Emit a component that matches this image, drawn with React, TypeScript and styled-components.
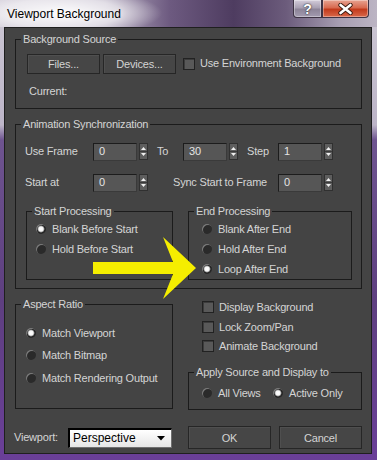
import React from "react"
import styled, { createGlobalStyle } from "styled-components"

const GlobalStyle = createGlobalStyle`
  body {
    margin: 0;
    background: #5a3a7a;
  }
  * {
    box-sizing: border-box;
  }
`

const SpinArrowsIcon = () => (
  <svg width="7" height="15" viewBox="0 0 7 15">
    <polygon points="1,6 3.5,3 6,6" fill="#f0f0f0" />
    <line x1="0" y1="7.5" x2="7" y2="7.5" stroke="#3a3a3a" strokeWidth="1" />
    <polygon points="1,9 3.5,12 6,9" fill="#f0f0f0" />
  </svg>
)

const Spinner: React.FC<{ value: string }> = ({ value }) => (
  <SpinWrap>
    <Field>{value}</Field>
    <SpinArrows>
      <SpinArrowsIcon />
    </SpinArrows>
  </SpinWrap>
)

const RadioItem: React.FC<{ label: string; on?: boolean; w?: number; h?: number }> = ({ label, on, w, h }) => (
  <OptionRow $w={w} $h={h}>
    <Radio $on={on} />
    <span>{label}</span>
  </OptionRow>
)

const CheckItem: React.FC<{ label: string }> = ({ label }) => (
  <CheckRow>
    <Checkbox />
    <span>{label}</span>
  </CheckRow>
)

export default function App() {
  return (
    <>
      <GlobalStyle />
      <Window>
        <TitleBar>
          <Title>Viewport Background</Title>
          <Captions>
            <CaptionButton>?</CaptionButton>
            <CaptionButton $close>
              <svg width="15" height="12" viewBox="0 0 15 12">
                <path d="M2.5 2 L12.5 10 M12.5 2 L2.5 10" stroke="#3a1a10" strokeWidth="4.4" strokeLinecap="round" />
                <path d="M2.5 2 L12.5 10 M12.5 2 L2.5 10" stroke="#ffffff" strokeWidth="2.6" strokeLinecap="round" />
              </svg>
            </CaptionButton>
          </Captions>
        </TitleBar>

        <Frame>
          <Client>
            <Group>
              <Legend>Background Source</Legend>
              <GroupBody $pt={8} $pl={11} $pb={10}>
                <Row $h={20}>
                  <Button $w={73}>Files...</Button>
                  <Button $w={73} $ml={3}>Devices...</Button>
                  <Checkbox $ml={7} />
                  <Text $ml={5}>Use Environment Background</Text>
                </Row>
                <Row $h={13} $mt={11}>
                  <Text $ml={2}>Current:</Text>
                </Row>
              </GroupBody>
            </Group>

            <Group $mt={9}>
              <Legend>Animation Synchronization</Legend>
              <GroupBody $pt={12} $pl={9} $pb={8}>
                <Row $h={18}>
                  <Text $w={68}>Use Frame</Text>
                  <Spinner value="0" />
                  <Text $w={26} $ml={9}>To</Text>
                  <Spinner value="30" />
                  <Text $w={31} $ml={9}>Step</Text>
                  <Spinner value="1" />
                </Row>
                <Row $h={18} $mt={13}>
                  <Text $w={68}>Start at</Text>
                  <Spinner value="0" />
                  <Text $w={105} $ml={25}>Sync Start to Frame</Text>
                  <Spinner value="0" />
                </Row>
                <SubGroups>
                  <Group $w={147}>
                    <Legend>Start Processing</Legend>
                    <GroupBody $pt={1} $pl={9}>
                      <RadioItem label="Blank Before Start" on />
                      <RadioItem label="Hold Before Start" />
                    </GroupBody>
                  </Group>
                  <Group $w={164}>
                    <Legend>End Processing</Legend>
                    <GroupBody $pt={1} $pl={13}>
                      <RadioItem label="Blank After End" />
                      <RadioItem label="Hold After End" />
                      <RadioItem label="Loop After End" on />
                    </GroupBody>
                  </Group>
                </SubGroups>
              </GroupBody>
            </Group>

            <Columns $mt={9}>
              <Group $self="start">
                <Legend>Aspect Ratio</Legend>
                <GroupBody $pt={11} $pl={10} $pb={19}>
                  <RadioItem label="Match Viewport" on h={22.5} />
                  <RadioItem label="Match Bitmap" h={22.5} />
                  <RadioItem label="Match Rendering Output" h={22.5} />
                </GroupBody>
              </Group>
              <RightColumn>
                <CheckList>
                  <CheckItem label="Display Background" />
                  <CheckItem label="Lock Zoom/Pan" />
                  <CheckItem label="Animate Background" />
                </CheckList>
                <Group $mt={10}>
                  <Legend>Apply Source and Display to</Legend>
                  <GroupBody $pt={5} $pl={13} $pb={7}>
                    <Row $h={18}>
                      <RadioItem label="All Views" w={71} />
                      <RadioItem label="Active Only" on />
                    </Row>
                  </GroupBody>
                </Group>
              </RightColumn>
            </Columns>

            <Columns $mt={16}>
              <Row $h={23}>
                <Text $w={54} $ml={-1}>Viewport:</Text>
                <Dropdown>
                  <span>Perspective</span>
                  <svg width="8" height="5" viewBox="0 0 8 5">
                    <polygon points="0,0 8,0 4,4.5" fill="#000" />
                  </svg>
                </Dropdown>
              </Row>
              <Row $h={23} $gap={8}>
                <Button $w={83} $h={23}>OK</Button>
                <Button $w={83} $h={23}>Cancel</Button>
              </Row>
            </Columns>
          </Client>
        </Frame>

        <Arrow width="377" height="460" viewBox="0 0 377 460">
          <polygon points="93,262 173,262 163,237 196,268 163,299 173,274 93,274" fill="#f5ee00" />
        </Arrow>
      </Window>
    </>
  )
}

const Window = styled.div`
  position: relative;
  width: 377px;
  height: 460px;
  display: flex;
  flex-direction: column;
  font-family: "Liberation Sans", Arial, sans-serif;
  font-size: 11px;
  letter-spacing: -0.2px;
  color: #d4d4d4;
  background: linear-gradient(
    to bottom,
    #cdc8d4 0px,
    #bdb5c8 125px,
    #6e5490 140px,
    #5e3f80 300px,
    #6a3f98 460px
  );
`

const TitleBar = styled.div`
  height: 28px;
  display: flex;
  justify-content: space-between;
  align-items: flex-start;
  background: radial-gradient(ellipse 100px 24px at 62px 13px, rgba(255, 255, 255, 0.97) 0%, rgba(255, 255, 255, 0.6) 60%, rgba(255, 255, 255, 0) 100%),
    linear-gradient(
      to right,
      #cfc9d6 0%,
      #b7aec2 28%,
      #6d5a80 45%,
      #4e3c60 62%,
      #6c5c7c 76%,
      #a79eb2 90%,
      #bcb5c4 100%
    );
`

const Title = styled.div`
  margin: 7px 0 0 7px;
  font-size: 12px;
  line-height: 14px;
  letter-spacing: 0;
  color: #000;
  text-shadow: 0 0 6px rgba(255, 255, 255, 0.9);
`

const Captions = styled.div`
  display: flex;
  margin-right: 8px;
`

const CaptionButton = styled.div<{ $close?: boolean }>`
  width: ${({ $close }) => ($close ? 47 : 29)}px;
  height: 18px;
  display: flex;
  align-items: center;
  justify-content: center;
  border: 1px solid #3e3344;
  border-top: none;
  border-radius: ${({ $close }) => ($close ? "0 0 4px 0" : "0 0 0 4px")};
  font-weight: bold;
  font-size: 14px;
  color: #fff;
  text-shadow: 0 0 2px #333, 0 0 1px #333;
  box-shadow: inset 0 0 0 1px rgba(255, 255, 255, 0.35);
  background: ${({ $close }) =>
    $close
      ? "linear-gradient(to bottom, #e7a392 0%, #d86a50 45%, #c23a1c 55%, #d9684a 100%)"
      : "linear-gradient(to bottom, #d3ccda 0%, #a9a1b3 45%, #8d8498 55%, #a39bb0 100%)"};
`

const Frame = styled.div`
  flex: 1;
  display: flex;
  padding: 0 5px 6px 4px;
`

const Client = styled.div`
  flex: 1;
  display: flex;
  flex-direction: column;
  background: #444444;
  border: 1px solid #1f1f1f;
  padding: 5px 9px 4px 10px;
`

const Group = styled.fieldset<{ $w?: number; $mt?: number; $self?: string }>`
  margin: ${({ $mt }) => $mt ?? 0}px 0 0 0;
  padding: 0;
  min-width: 0;
  ${({ $w }) => ($w ? `width: ${$w}px;` : "")}
  ${({ $self }) => ($self ? `align-self: ${$self};` : "")}
  border: 1px solid #1b1b1b;
`

const Legend = styled.legend`
  margin-left: 5px;
  padding: 0 2px;
  font-size: 11px;
  line-height: 13px;
  color: #d4d4d4;
`

const GroupBody = styled.div<{ $pt?: number; $pl?: number; $pb?: number }>`
  display: flex;
  flex-direction: column;
  padding: ${({ $pt }) => $pt ?? 0}px 0 ${({ $pb }) => $pb ?? 0}px ${({ $pl }) => $pl ?? 0}px;
`

const Row = styled.div<{ $h?: number; $mt?: number; $gap?: number }>`
  display: flex;
  align-items: center;
  height: ${({ $h }) => $h ?? 20}px;
  margin-top: ${({ $mt }) => $mt ?? 0}px;
  gap: ${({ $gap }) => $gap ?? 0}px;
`

const Text = styled.span<{ $w?: number; $ml?: number }>`
  display: inline-block;
  flex: none;
  ${({ $w }) => ($w ? `width: ${$w}px;` : "")}
  margin-left: ${({ $ml }) => $ml ?? 0}px;
  white-space: nowrap;
  line-height: 13px;
`

const Button = styled.button<{ $w: number; $h?: number; $ml?: number }>`
  width: ${({ $w }) => $w}px;
  height: ${({ $h }) => $h ?? 20}px;
  margin-left: ${({ $ml }) => $ml ?? 0}px;
  padding: 0;
  font-family: inherit;
  font-size: 11px;
  letter-spacing: inherit;
  color: #d4d4d4;
  background: #464646;
  border: 1px solid #262626;
  box-shadow: inset 1px 1px 0 #4f4f4f;
`

const Checkbox = styled.span<{ $ml?: number }>`
  flex: none;
  width: 12px;
  height: 12px;
  margin-left: ${({ $ml }) => $ml ?? 0}px;
  border: 1px solid #222;
  background: #595959;
  box-shadow: inset 1px 1px 0 #3c3c3c;
`

const CheckList = styled.div`
  display: flex;
  flex-direction: column;
  padding-left: 14px;
`

const CheckRow = styled.div`
  display: flex;
  align-items: center;
  gap: 5px;
  height: 19.5px;
`

const OptionRow = styled.div<{ $w?: number; $h?: number }>`
  display: flex;
  align-items: center;
  gap: 6px;
  flex: none;
  height: ${({ $h }) => $h ?? 20}px;
  ${({ $w }) => ($w ? `width: ${$w}px;` : "")}
  white-space: nowrap;
`

const Radio = styled.span<{ $on?: boolean }>`
  flex: none;
  width: 10px;
  height: 10px;
  border-radius: 50%;
  background: ${({ $on }) =>
    $on
      ? "radial-gradient(circle, #ffffff 0, #f4f4f4 2.2px, #9a9a9a 3px, #262626 3.8px)"
      : "#2a2a2a"};
  box-shadow: inset 1px 1px 0 #7c7c7c;
`

const SpinWrap = styled.div`
  display: flex;
  align-items: center;
  flex: none;
`

const Field = styled.div`
  width: 44px;
  height: 18px;
  padding: 1px 0 0 5px;
  line-height: 13px;
  color: #e4e4e4;
  background: #565656;
  border: 1px solid #1c1c1c;
  border-right-color: #3a3a3a;
  border-bottom-color: #3a3a3a;
`

const SpinArrows = styled.div`
  width: 9px;
  height: 17px;
  margin-left: 2px;
  display: flex;
  align-items: center;
  justify-content: center;
  background: #5e5e5e;
  border: 1px solid #303030;
`

const SubGroups = styled.div`
  display: flex;
  gap: 15px;
  margin-top: 13px;
  padding-left: 1px;
`

const Columns = styled.div<{ $mt?: number }>`
  display: grid;
  grid-template-columns: 158px 174px;
  column-gap: 15px;
  margin-top: ${({ $mt }) => $mt ?? 0}px;
`

const RightColumn = styled.div`
  display: flex;
  flex-direction: column;
`

const Dropdown = styled.div`
  width: 104px;
  height: 20px;
  display: flex;
  align-items: center;
  justify-content: space-between;
  padding: 0 6px 0 3px;
  color: #000;
  font-size: 12px;
  letter-spacing: 0;
  background: linear-gradient(to bottom, #ffffff, #e6e6e6);
  border-top: 2px solid #000;
  border-left: 2px solid #000;
  border-right: 1px solid #707070;
  border-bottom: 1px solid #707070;
`

const Arrow = styled.svg`
  position: absolute;
  left: 0;
  top: 0;
  pointer-events: none;
`
